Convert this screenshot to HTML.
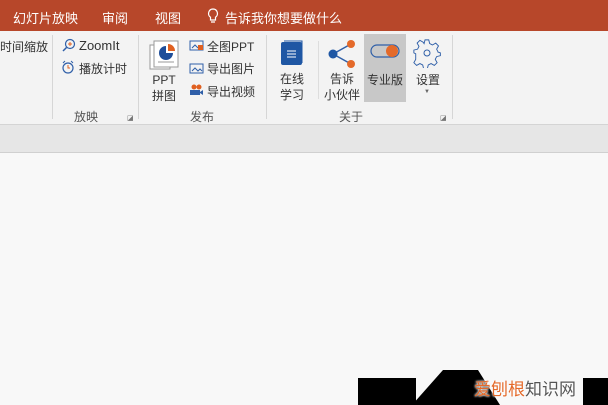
<!DOCTYPE html>
<html><head><meta charset="utf-8"><style>
body{margin:0;width:608px;height:405px;overflow:hidden;background:#f8f8f8;font-family:"Liberation Sans","Noto Sans CJK SC",sans-serif;position:relative}
.a{position:absolute;white-space:nowrap}
.t{color:#fff;font-size:13px;top:8px}
.r{font-size:12px;color:#333}
.sep{position:absolute;top:35px;width:1px;height:84px;background:#d6d6d6}
.g{font-size:12px;color:#555;top:108px}
</style></head><body>
<div class="a" style="left:0;top:0;width:608px;height:31px;background:#b7472a"></div>
<div class="a t" style="left:13px">幻灯片放映</div>
<div class="a t" style="left:102px">审阅</div>
<div class="a t" style="left:155px">视图</div>
<svg class="a" style="left:207px;top:8px" width="12" height="16" viewBox="0 0 12 16"><path d="M6 1a4.5 4.5 0 0 0-2.5 8.2V12h5V9.2A4.5 4.5 0 0 0 6 1zM4 14h4" fill="none" stroke="#fff" stroke-width="1.2"/></svg>
<div class="a t" style="left:225px">告诉我你想要做什么</div>
<div class="a" style="left:0;top:31px;width:608px;height:93px;background:#f3f3f3"></div>
<div class="a" style="left:0;top:124px;width:608px;height:1px;background:#d4d4d4"></div>
<div class="a" style="left:0;top:125px;width:608px;height:27px;background:#e6e6e6"></div>
<div class="a" style="left:0;top:152px;width:608px;height:1px;background:#d0d0d0"></div>
<div class="sep" style="left:52px"></div><div class="sep" style="left:138px"></div><div class="sep" style="left:266px"></div><div class="sep" style="left:452px"></div>
<div class="a" style="left:318px;top:41px;width:1px;height:58px;background:#ddd"></div>
<div class="a r" style="left:0;top:38px">时间缩放</div>
<svg class="a" style="left:61px;top:38px" width="15" height="15"><circle cx="9" cy="6" r="4.5" fill="none" stroke="#2f5fa8" stroke-width="1.2"/><path d="M9 4v4M7 6h4" stroke="#e06020"/><path d="M5.5 9.5L2 13" stroke="#2f5fa8" stroke-width="1.5"/></svg>
<div class="a r" style="left:79px;top:38px;font-size:13px">ZoomIt</div>
<svg class="a" style="left:61px;top:60px" width="14" height="14"><circle cx="7" cy="8" r="5" fill="none" stroke="#2f5fa8" stroke-width="1.2"/><path d="M7 5v3h2" stroke="#e06020" fill="none"/><path d="M2 3l2-2M12 3l-2-2" stroke="#2f5fa8"/></svg>
<div class="a r" style="left:79px;top:60px">播放计时</div>
<div class="a g" style="left:74px">放映</div>
<div class="a" style="left:127px;top:114px;font-size:7px;color:#777">◪</div>
<svg class="a" style="left:149px;top:39px" width="32" height="32"><rect x="1" y="6" width="20" height="24" fill="#fff" stroke="#999"/><rect x="5" y="2" width="24" height="26" fill="#fff" stroke="#999"/><path d="M17 7a7 7 0 1 0 7 7h-7z" fill="#1f4e9a"/><path d="M19 5v7h7a7 7 0 0 0-7-7z" fill="#e06020"/><path d="M9 23h16" stroke="#999"/></svg>
<div class="a r" style="left:152px;top:72px;line-height:16px;text-align:center">PPT<br>拼图</div>
<svg class="a" style="left:189px;top:40px" width="15" height="11"><rect x="1" y="1" width="13" height="9" fill="none" stroke="#2f5fa8"/><path d="M3 8l3-3 3 3" stroke="#2f5fa8" fill="none"/><rect x="9" y="5" width="5" height="5" fill="#e06020"/></svg>
<div class="a r" style="left:207px;top:38px">全图PPT</div>
<svg class="a" style="left:189px;top:63px" width="15" height="11"><rect x="1" y="1" width="13" height="9" fill="none" stroke="#2f5fa8"/><path d="M3 8l3-3 3 3 2-2 2 2" stroke="#2f5fa8" fill="none"/></svg>
<div class="a r" style="left:207px;top:60px">导出图片</div>
<svg class="a" style="left:189px;top:84px" width="15" height="12"><circle cx="5" cy="3" r="2.5" fill="#e06020"/><circle cx="10" cy="3" r="2.5" fill="#e06020"/><rect x="1" y="6" width="10" height="5" fill="#2f5fa8"/><path d="M11 8l3-2v5l-3-2z" fill="#2f5fa8"/></svg>
<div class="a r" style="left:207px;top:83px">导出视频</div>
<div class="a g" style="left:190px">发布</div>
<svg class="a" style="left:280px;top:40px" width="24" height="26"><rect x="1" y="2" width="21" height="23" rx="2" fill="#1f57a4"/><path d="M4 1h18v22" fill="none" stroke="#1f57a4"/><path d="M7 11h9M7 14h9M7 17h9" stroke="#fff"/></svg>
<div class="a r" style="left:280px;top:71px;line-height:16px">在线<br>学习</div>
<svg class="a" style="left:327px;top:39px" width="30" height="30"><path d="M6 15L24 5M6 15L24 25" stroke="#2f5fa8" stroke-width="1.5"/><circle cx="6" cy="15" r="4.5" fill="#1f57a4"/><circle cx="24" cy="5" r="4" fill="#e46a2a"/><circle cx="24" cy="25" r="4" fill="#e46a2a"/></svg>
<div class="a r" style="left:324px;top:71px;line-height:16px;text-align:center">告诉<br>小伙伴</div>
<div class="a" style="left:364px;top:34px;width:42px;height:68px;background:#c8c8c8"></div>
<svg class="a" style="left:370px;top:43px" width="30" height="16"><rect x="1" y="2" width="28" height="12" rx="6" fill="none" stroke="#2f5fa8" stroke-width="1.2"/><circle cx="22" cy="8" r="6" fill="#e46a2a"/></svg>
<div class="a r" style="left:367px;top:71px">专业版</div>
<svg class="a" style="left:412px;top:38px" width="30" height="30" viewBox="0 0 30 30"><path d="M13 2h4l1 4 3 1.5 3.5-2 3 3-2 3.5L27 15l-.5 0 3 1v3l-4 1-1.5 3 2 3.5-3 3-3.5-2-3 1.5-1 4h-4l-1-4-3-1.5-3.5 2-3-3 2-3.5L3 17l-2-1v-3l4-1 1.5-3-2-3.5 3-3 3.5 2L12 6z" transform="scale(.93) translate(1,0)" fill="none" stroke="#2f5fa8"/><circle cx="15" cy="15" r="3" fill="none" stroke="#2f5fa8"/></svg>
<div class="a r" style="left:416px;top:71px">设置</div>
<div class="a" style="left:424px;top:89px;font-size:6px;color:#666">▼</div>
<div class="a g" style="left:339px">关于</div>
<div class="a" style="left:440px;top:114px;font-size:7px;color:#777">◪</div>
<svg class="a" style="left:0;top:0" width="608" height="405"><path d="M358 378H416V405H358z M412 405 L443 370 L478 370 L500 405z M583 378H608V405H583z" fill="#000"/></svg>
<div class="a" style="left:474px;top:375px;font-size:17px;color:#e46a2a;text-shadow:0 0 2px #fff,0 0 2px #fff">爱刨根<span style="color:#555">知识网</span></div>
</body></html>
